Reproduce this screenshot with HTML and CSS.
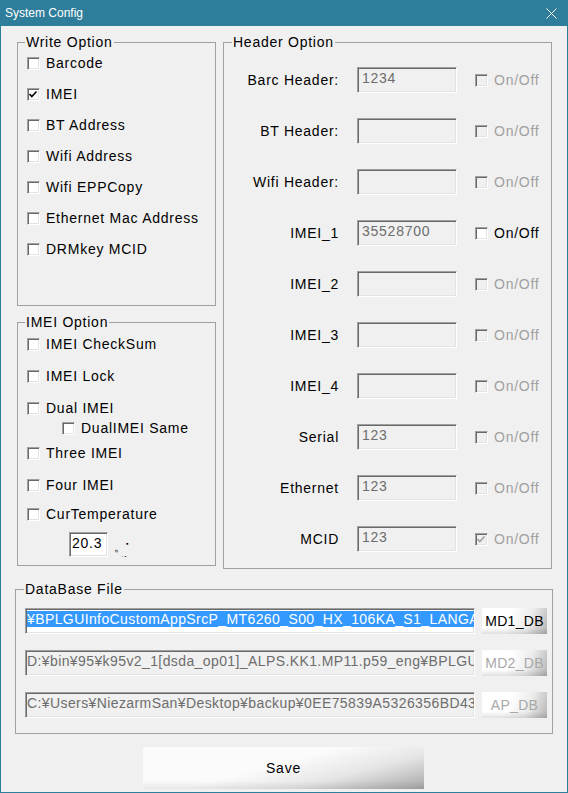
FILE: index.html
```html
<!DOCTYPE html>
<html lang="en">

<head>
    <meta charset="utf-8">
    <meta name="viewport" content="width=device-width, initial-scale=1.0">
    <title>System Config</title>
    <link rel="stylesheet" href="styles.css">
</head>

<body>
    <div class="window">
        <div class="titlebar">
            <span class="title">System Config</span>
            <svg class="close" width="11" height="11" viewBox="0 0 11 11">
                <path d="M0.5 0.5 L10.5 10.5 M10.5 0.5 L0.5 10.5" stroke="#fff" stroke-width="1" fill="none" />
            </svg>
        </div>

        <div class="client">
            <div class="top">
                <div class="leftcol">
                    <fieldset class="group write">
                        <legend>Write Option</legend>
                        <div class="list">
                            <label class="chk"><span class="box"></span>Barcode</label>
                            <label class="chk"><span class="box">
                                    <svg width="11" height="11" viewBox="0 0 11 11">
                                        <polyline points="1.5,5 3.8,7.5 8.5,2.5" stroke="#000" stroke-width="1.6" fill="none" />
                                    </svg>
                                </span>IMEI</label>
                            <label class="chk"><span class="box"></span>BT Address</label>
                            <label class="chk"><span class="box"></span>Wifi Address</label>
                            <label class="chk"><span class="box"></span>Wifi EPPCopy</label>
                            <label class="chk"><span class="box"></span>Ethernet Mac Address</label>
                            <label class="chk"><span class="box"></span>DRMkey MCID</label>
                        </div>
                    </fieldset>

                    <fieldset class="group imei">
                        <legend>IMEI Option</legend>
                        <div class="list">
                            <label class="chk"><span class="box"></span>IMEI CheckSum</label>
                            <label class="chk"><span class="box"></span>IMEI Lock</label>
                            <label class="chk"><span class="box"></span>Dual IMEI</label>
                            <label class="chk sub"><span class="box"></span>DualIMEI Same</label>
                            <label class="chk"><span class="box"></span>Three IMEI</label>
                            <label class="chk"><span class="box"></span>Four IMEI</label>
                            <label class="chk cur"><span class="box"></span>CurTemperature</label>
                            <div class="temprow">
                                <span class="edit tval">20.3</span>
                                <span class="unit">。<sup>▪</sup><br>atic</span>
                            </div>
                        </div>
                    </fieldset>
                </div>

                <fieldset class="group header">
                    <legend>Header Option</legend>
                    <div class="hlist">
                        <div class="hrow"><span class="hlabel">Barc Header:</span><span class="edit dis">1234</span><label class="chk dis"><span class="box"></span>On/Off</label></div>
                        <div class="hrow"><span class="hlabel">BT Header:</span><span class="edit dis"></span><label class="chk dis"><span class="box"></span>On/Off</label></div>
                        <div class="hrow"><span class="hlabel">Wifi Header:</span><span class="edit dis"></span><label class="chk dis"><span class="box"></span>On/Off</label></div>
                        <div class="hrow"><span class="hlabel">IMEI_1</span><span class="edit dis">35528700</span><label class="chk"><span class="box"></span>On/Off</label></div>
                        <div class="hrow"><span class="hlabel">IMEI_2</span><span class="edit dis"></span><label class="chk dis"><span class="box"></span>On/Off</label></div>
                        <div class="hrow"><span class="hlabel">IMEI_3</span><span class="edit dis"></span><label class="chk dis"><span class="box"></span>On/Off</label></div>
                        <div class="hrow"><span class="hlabel">IMEI_4</span><span class="edit dis"></span><label class="chk dis"><span class="box"></span>On/Off</label></div>
                        <div class="hrow"><span class="hlabel">Serial</span><span class="edit dis">123</span><label class="chk dis"><span class="box"></span>On/Off</label></div>
                        <div class="hrow"><span class="hlabel">Ethernet</span><span class="edit dis">123</span><label class="chk dis"><span class="box"></span>On/Off</label></div>
                        <div class="hrow"><span class="hlabel">MCID</span><span class="edit dis">123</span><label class="chk dis"><span class="box">
                                    <svg width="11" height="11" viewBox="0 0 11 11">
                                        <polyline points="1.5,5 3.8,7.5 8.5,2.5" stroke="#a0a0a0" stroke-width="1.6" fill="none" />
                                    </svg>
                                </span>On/Off</label></div>
                    </div>
                </fieldset>
            </div>

            <fieldset class="group db">
                <legend>DataBase File</legend>
                <div class="dblist">
                    <div class="dbrow">
                        <span class="edit path"><span class="sel">¥BPLGUInfoCustomAppSrcP_MT6260_S00_HX_106KA_S1_LANGA</span></span>
                        <button class="skin">MD1_DB</button>
                    </div>
                    <div class="dbrow">
                        <span class="edit path dis">D:¥bin¥95¥k95v2_1[dsda_op01]_ALPS.KK1.MP11.p59_eng¥BPLGU</span>
                        <button class="skin" disabled>MD2_DB</button>
                    </div>
                    <div class="dbrow">
                        <span class="edit path dis">C:¥Users¥NiezarmSan¥Desktop¥backup¥0EE75839A5326356BD43</span>
                        <button class="skin" disabled>AP_DB</button>
                    </div>
                </div>
            </fieldset>

            <div class="savebar">
                <button class="save">Save</button>
            </div>
        </div>
    </div>
</body>

</html>
```

FILE: styles.css
```css
body {
    margin: 0;
    background-color: #F0F0F0;
}

.window {
    width: 568px;
    height: 793px;
    box-sizing: border-box;
    border: 1px solid #2E7D9A;
    border-top: 0;
    background-color: #F0F0F0;
    font-family: "Liberation Sans", Arial, sans-serif;
    font-size: 14px;
    letter-spacing: 0.75px;
    color: #000;
}

.titlebar {
    height: 26px;
    margin: 0 -1px;
    padding: 0 11px 0 5px;
    display: flex;
    align-items: center;
    justify-content: space-between;
    background-color: #2E7D9A;
    color: #fff;
    font-size: 12px;
    letter-spacing: 0;
}

.client {
    padding: 8px 15px 0 16px;
}

.top {
    display: flex;
    gap: 7px;
    align-items: flex-start;
}

.leftcol {
    width: 199px;
    display: flex;
    flex-direction: column;
    gap: 8px;
}

/* group boxes */
.group {
    margin: 0;
    padding: 0;
    min-width: 0;
    box-sizing: border-box;
    border: 1px solid #A0A0A0;
}

.group legend {
    margin-left: 7px;
    padding: 0 1px;
    line-height: 16px;
}

.write {
    height: 272px;
}

.imei {
    height: 252px;
}

.header {
    width: 329px;
    height: 535px;
}

.header legend,
.db legend {
    margin-left: 8px;
}

/* checkboxes */
.chk {
    display: flex;
    align-items: center;
    gap: 6px;
    height: 16px;
    line-height: 16px;
    white-space: nowrap;
}

.box {
    width: 13px;
    height: 13px;
    box-sizing: border-box;
    flex: none;
    border: 1px solid;
    border-color: #A0A0A0 #fff #fff #A0A0A0;
    box-shadow: inset 1px 1px #696969, inset -1px -1px #E3E3E3;
    background-color: #fff;
}

.box svg {
    display: block;
}

.chk.dis {
    color: #A0A0A0;
}

.chk.dis .box {
    background-color: #F0F0F0;
}

.write .list {
    display: flex;
    flex-direction: column;
    gap: 15px;
    padding: 5px 0 0 9px;
}

.imei .list {
    padding: 0 0 0 9px;
}

.imei .chk {
    margin-top: 16px;
}

.imei .chk:first-child {
    margin-top: 6px;
}

.imei .sub {
    margin-top: 4px;
    padding-left: 35px;
}

.imei .sub+.chk {
    margin-top: 9px;
}

.imei .cur {
    margin-top: 13px;
}

.temprow {
    display: flex;
    align-items: flex-start;
    margin-top: 10px;
    padding-left: 42px;
}

/* edit boxes */
.edit {
    display: block;
    height: 26px;
    box-sizing: border-box;
    padding: 2px 4px 0;
    border: 1px solid;
    border-color: #A0A0A0 #fff #fff #A0A0A0;
    box-shadow: inset 1px 1px #696969, inset -1px -1px #E3E3E3;
    background-color: #fff;
    line-height: 16px;
    white-space: nowrap;
    overflow: hidden;
}

.edit.dis {
    background-color: #F0F0F0;
    color: #6D6D6D;
}

.tval {
    width: 39px;
    height: 25px;
    padding-left: 2px;
}

.unit {
    width: 26px;
    height: 25px;
    margin-left: 6px;
    padding-top: 5px;
    box-sizing: border-box;
    overflow: hidden;
    font-size: 12px;
    line-height: 14px;
    letter-spacing: 0;
}

.unit sup {
    font-size: 7px;
}

/* header option rows */
.hlist {
    display: flex;
    flex-direction: column;
    gap: 25px;
    padding-top: 17px;
}

.hrow {
    display: grid;
    grid-template-columns: 115px 100px auto;
    column-gap: 18px;
    align-items: center;
    height: 26px;
}

.hlabel {
    text-align: right;
}

/* database */
.db {
    width: 538px;
    height: 153px;
    margin: 12px 0 0 -2px;
}

.dblist {
    display: flex;
    flex-direction: column;
    gap: 16px;
    padding: 11px 0 0 9px;
}

.dbrow {
    display: flex;
    gap: 7px;
}

.path {
    width: 450px;
    padding-left: 1px;
    letter-spacing: 0.4px;
}

.sel {
    background-color: #3399FF;
    color: #fff;
    border-right: 1px solid #C86400;
}

.skin {
    width: 65px;
    height: 26px;
    padding: 0;
    border: 0;
    flex: none;
    font-family: "Liberation Sans", Arial, sans-serif;
    font-size: 14px;
    letter-spacing: 0.3px;
    color: #000;
    background: linear-gradient(to bottom, rgba(0, 0, 0, 0) 75%, rgba(0, 0, 0, 0.12)),
        linear-gradient(110deg, #fff 40%, #ececec 70%, #b4b4b4 100%);
}

.skin:disabled {
    color: #A8A8A8;
}

.savebar {
    margin: 13px 0 0 126px;
}

.save {
    width: 281px;
    height: 42px;
    padding: 0;
    border: 0;
    font-family: "Liberation Sans", Arial, sans-serif;
    font-size: 14px;
    letter-spacing: 0.75px;
    color: #000;
    background: linear-gradient(to bottom, rgba(0, 0, 0, 0) 80%, rgba(0, 0, 0, 0.08)),
        linear-gradient(165deg, #fbfbfb 45%, #e6e6e6 70%, #a8a8a8 100%);
}
```
